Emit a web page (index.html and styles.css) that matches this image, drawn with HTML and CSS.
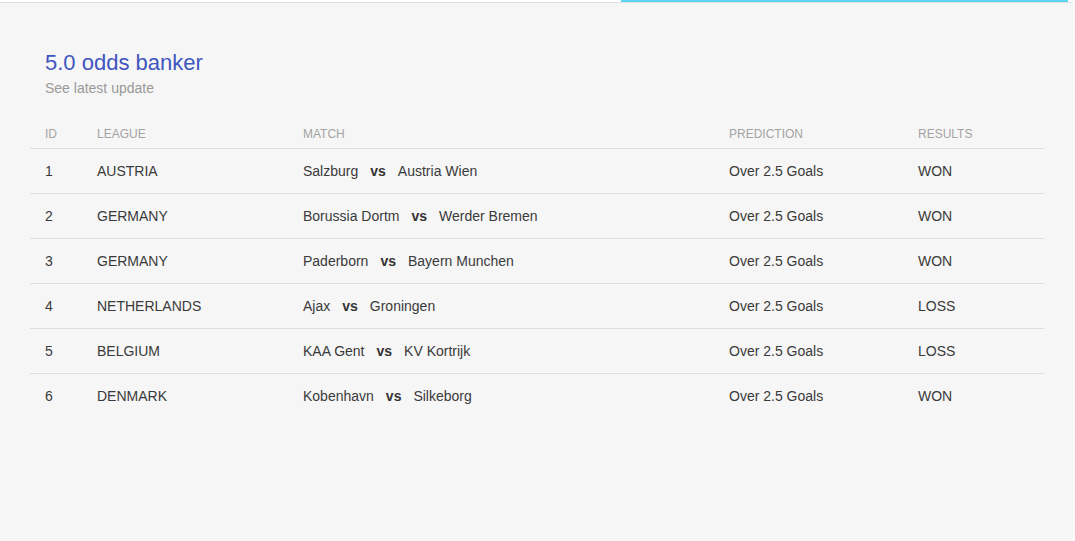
FILE: index.html
```html
<!DOCTYPE html>
<html lang="en">
<head>
<meta charset="utf-8">
<title>5.0 odds banker</title>
<link rel="stylesheet" href="styles.css">
</head>
<body>
<div class="topbar"><div class="progress"></div></div>
<main class="page">
  <section class="card">
    <header class="card-head">
      <h1 class="title">5.0 odds banker</h1>
      <p class="subtitle">See latest update</p>
    </header>
    <table class="table">
      <thead>
        <tr><th class="c-id">ID</th><th class="c-league">LEAGUE</th><th class="c-match">MATCH</th><th class="c-pred">PREDICTION</th><th class="c-res">RESULTS</th></tr>
      </thead>
      <tbody>
        <tr><td>1</td><td>AUSTRIA</td><td>Salzburg<b class="vs">vs</b>Austria Wien</td><td>Over 2.5 Goals</td><td>WON</td></tr>
        <tr><td>2</td><td>GERMANY</td><td>Borussia Dortm<b class="vs">vs</b>Werder Bremen</td><td>Over 2.5 Goals</td><td>WON</td></tr>
        <tr><td>3</td><td>GERMANY</td><td>Paderborn<b class="vs">vs</b>Bayern Munchen</td><td>Over 2.5 Goals</td><td>WON</td></tr>
        <tr><td>4</td><td>NETHERLANDS</td><td>Ajax<b class="vs">vs</b>Groningen</td><td>Over 2.5 Goals</td><td>LOSS</td></tr>
        <tr><td>5</td><td>BELGIUM</td><td>KAA Gent<b class="vs">vs</b>KV Kortrijk</td><td>Over 2.5 Goals</td><td>LOSS</td></tr>
        <tr><td>6</td><td>DENMARK</td><td>Kobenhavn<b class="vs">vs</b>Silkeborg</td><td>Over 2.5 Goals</td><td>WON</td></tr>
      </tbody>
    </table>
  </section>
</main>
</body>
</html>
```
FILE: styles.css
```css
html, body {
  margin: 0;
  padding: 0;
  height: 100%;
}
body {
  background: #f6f6f6;
  font-family: "Liberation Sans", Arial, sans-serif;
  color: #333;
  overflow: hidden;
  border-right: 2px solid #fbfbfb;
  box-sizing: border-box;
}
.topbar {
  height: 2px;
  background: #ffffff;
  border-bottom: 1px solid #e2e2e2;
  display: flex;
  justify-content: flex-end;
  padding-right: 5px;
}
.progress {
  width: 447px;
  height: 2px;
  background: #5dd4f0;
}
.page {
  padding: 47px 30px 0 30px;
}
.card {
  width: 1014px;
}
.card-head {
  padding: 0 15px 22px;
}
.title {
  margin: 0;
  font-size: 22px;
  font-weight: normal;
  color: #3f55bf;
  line-height: 26px;
}
.subtitle {
  margin: 4px 0 0;
  font-size: 14px;
  color: #999;
  line-height: 17px;
}
.table {
  width: 100%;
  border-collapse: collapse;
  font-size: 14px;
}
.table th {
  text-align: left;
  font-weight: normal;
  font-size: 12px;
  color: #a3a3a3;
  height: 29px;
  padding: 0 15px;
  border-bottom: 1px solid #ddd;
  vertical-align: middle;
}
.table td {
  height: 44px;
  padding: 0 15px;
  border-bottom: 1px solid #ddd;
  color: #3a3a3a;
  vertical-align: middle;
}
.table tbody tr:last-child td {
  border-bottom: none;
}
.c-id { width: 22px; }
.c-league { width: 176px; }
.c-match { width: 396px; }
.c-pred { width: 159px; }
.vs {
  font-weight: bold;
  margin: 0 12px;
  color: #333;
}
```
